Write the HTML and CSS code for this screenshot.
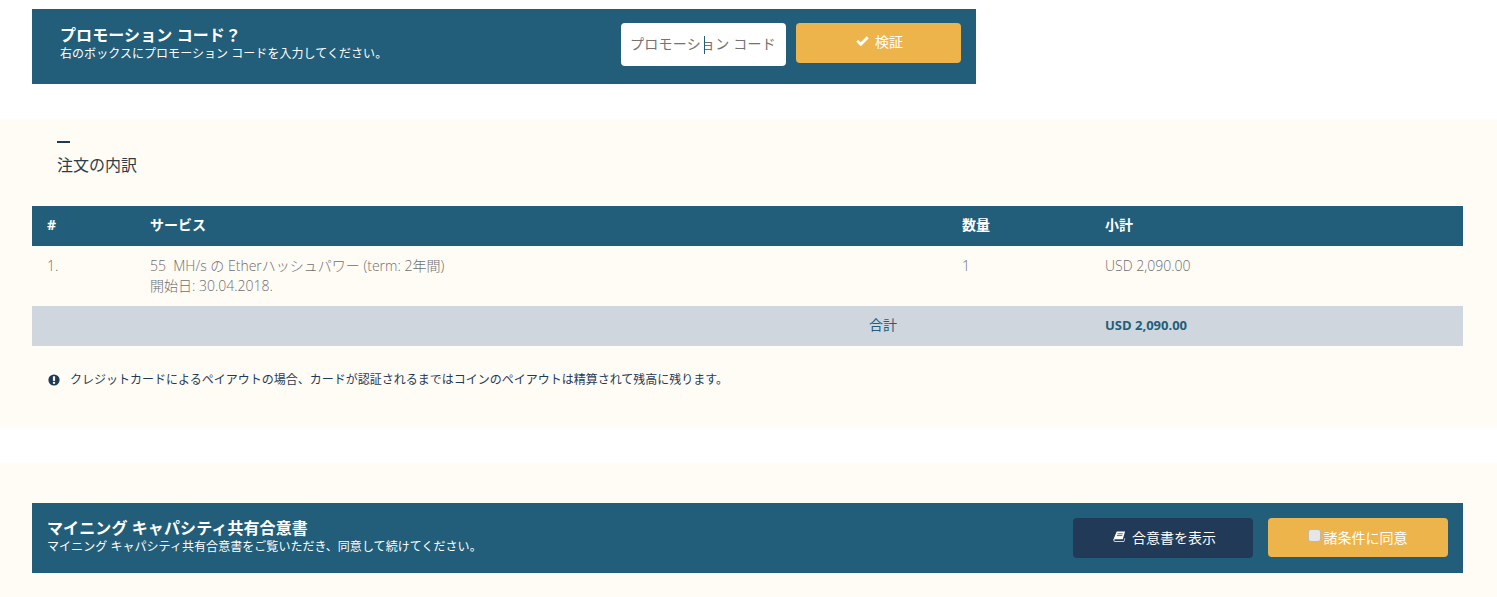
FILE: index.html
```html
<!DOCTYPE html>
<html lang="ja">
<head>
<meta charset="utf-8">
<title>注文の内訳</title>
<link rel="stylesheet" href="styles.css">
</head>
<body>
<section class="promo">
  <div class="banner-text">
    <h3 class="banner-title">プロモーション コード？</h3>
    <p class="banner-sub">右のボックスにプロモーション コードを入力してください。</p>
  </div>
  <div class="promo-input">プロモーション コード<span class="caret"></span></div>
  <button class="btn btn-gold promo-btn"><svg class="ico" viewBox="0 0 14 14"><path d="M1.3 7.3 L5.2 11 L12.7 3.4" fill="none" stroke="#fff" stroke-width="3"/></svg><span>検証</span></button>
</section>

<section class="panel order">
  <div class="heading"><span class="dash"></span><h2>注文の内訳</h2></div>
  <div class="row row-head"><div class="c1">#</div><div class="c2">サービス</div><div class="c3">数量</div><div class="c4">小計</div></div>
  <div class="row row-body"><div class="c1">1.</div><div class="c2">55&nbsp; MH/s の Etherハッシュパワー (term: 2年間)<br>開始日: 30.04.2018.</div><div class="c3">1</div><div class="c4">USD 2,090.00</div></div>
  <div class="row row-total"><div class="total-label">合計</div><div class="c4">USD 2,090.00</div></div>
  <p class="note"><svg class="note-ico" viewBox="0 0 12 12"><circle cx="6" cy="6" r="5.6" fill="#1f3a57"/><rect x="4.9" y="2.3" width="2.2" height="4.6" fill="#fffcf5"/><rect x="4.9" y="7.9" width="2.2" height="1.9" fill="#fffcf5"/></svg>クレジットカードによるペイアウトの場合、カードが認証されるまではコインのペイアウトは精算されて残高に残ります。</p>
</section>

<section class="panel agree-wrap">
  <div class="agree">
    <div class="banner-text">
      <h3 class="banner-title">マイニング キャパシティ共有合意書</h3>
      <p class="banner-sub">マイニング キャパシティ共有合意書をご覧いただき、同意して続けてください。</p>
    </div>
    <button class="btn btn-navy"><svg class="ico" viewBox="0 0 14 14"><path d="M4 1.5 H13 L10.5 10 H2.2 Q1 10 1.4 11.2 Q1.7 12 3 12 H11.5 L12.6 8.5 L13.2 9 L11.9 13 H3 Q0.3 13 .3 10.5 Z" fill="#fff"/><path d="M4.8 4 H10.5 M4.2 6 H10" stroke="#203a57" stroke-width=".8"/></svg><span>合意書を表示</span></button>
    <button class="btn btn-gold agree-btn"><span class="check"></span><span>諸条件に同意</span></button>
  </div>
</section>
</body>
</html>
```
FILE: styles.css
```css
* { box-sizing: border-box; }
html, body { margin: 0; padding: 0; }
body {
  background: #fff;
  color: #2b2b2b;
  font-family: "Open Sans", "Noto Sans CJK JP", sans-serif;
  font-size: 14px;
  overflow: hidden;
  height: 597px;
}
.promo {
  margin: 9px 0 0 32px;
  width: 944px;
  height: 75px;
  background: #225e79;
  display: flex;
  align-items: flex-start;
  padding: 14px 15px 0 28px;
}
.banner-text { flex: 1; color: #fff; }
.promo .banner-text { padding-top: 3px; }
.agree .banner-text { padding-top: 1px; }
.banner-title { margin: 0; font-size: 16px; line-height: 18px; font-weight: 700; letter-spacing: .1px; }
.banner-sub { margin: 3px 0 0; font-size: 12px; line-height: 14px; letter-spacing: .05px; }
.promo-input {
  width: 165px;
  height: 43px;
  background: #fff;
  border-radius: 4px;
  color: #77716f;
  font-size: 14px;
  letter-spacing: .25px;
  line-height: 42px;
  padding-left: 9px;
  position: relative;
  white-space: nowrap;
  overflow: hidden;
}
.caret { position: absolute; left: 83px; top: 13px; width: 1px; height: 18px; background: #225e79; }
.btn {
  border: 0;
  border-radius: 4px;
  color: #fff;
  font-family: inherit;
  font-size: 14px;
  height: 40px;
  display: flex;
  align-items: center;
  justify-content: center;
  gap: 6px;
  padding: 0 0 3px;
}
.btn-gold { background: #eeb44c; }
.btn-navy { background: #203a57; width: 180px; padding-left: 3px; }
.promo-btn { width: 165px; margin-left: 10px; padding-left: 2px; padding-bottom: 5px; }
.agree-btn { width: 180px; height: 39px; margin-left: 15px; gap: 4px; padding-bottom: 2px; }
.ico { width: 13px; height: 13px; }
.panel { background: #fffcf5; }
.order { margin-top: 35px; height: 309px; padding: 0 34px 0 32px; }
.heading { padding: 22px 0 0 25px; height: 87px; }
.dash { display: block; width: 13px; height: 2px; background: #1f3a57; }
.heading h2 { margin: 12px 0 0; font-size: 16px; line-height: 20px; font-weight: 400; color: #2f3c4a; }
.row { display: flex; padding: 0 15px; }
.row-head { height: 40px; background: #225e79; color: #fff; font-weight: 700; align-items: center; padding-bottom: 4px; }
.row-body { height: 60px; color: #6e6e72; font-weight: 300; padding-top: 10px; line-height: 20px; }
.row-total { height: 40px; background: #cfd6dd; color: #225e79; font-weight: 700; align-items: center; font-size: 13px; padding-bottom: 3px; }
.c1 { width: 103px; }
.c2 { width: 812px; }
.c3 { width: 143px; }
.c4 { flex: 1; }
.total-label { width: 1058px; text-align: right; padding: 0 208px 1px 0; font-size: 14px; font-weight: 400; }
.note { margin: 0; padding: 25px 0 0 16px; font-size: 12px; line-height: 18px; display: flex; align-items: center; color: #1f3a57; }
.note-ico { width: 12px; height: 12px; margin-right: 10px; }
.agree-wrap { margin-top: 35px; height: 135px; padding: 40px 34px 0 32px; }
.agree { height: 70px; background: #225e79; display: flex; align-items: flex-start; padding: 15px 15px 0; }
.check {
  width: 11px;
  height: 11px;
  background: #e6e6e6;
  border-radius: 2px;
  box-shadow: 0 0 1px 1px #bdb9b0;
  margin-top: -3px;
}
```
